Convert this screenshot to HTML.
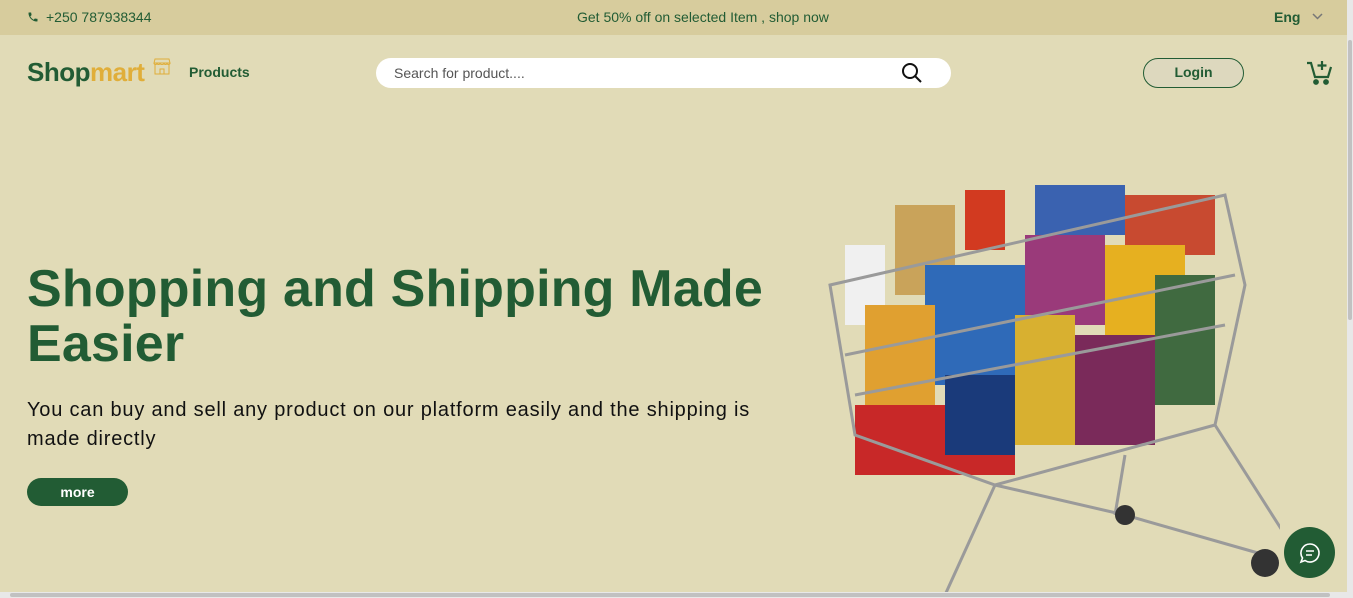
<!DOCTYPE html>
<html><head><style>
*{margin:0;padding:0;box-sizing:border-box}
body{width:1353px;height:598px;overflow:hidden;background:#e1dbb7;font-family:"Liberation Sans",sans-serif;position:relative}
.top{position:absolute;left:0;top:0;width:1347px;height:35px;background:#d7cc9d;color:#225c34;font-size:14px}
.top span{position:absolute;top:9px}
.logo{position:absolute;left:27px;top:57px;font-size:26px;font-weight:bold;color:#225c34;letter-spacing:-0.5px}
.logo b{color:#e0ae3a}
.search{position:absolute;left:376px;top:58px;width:575px;height:30px;background:#fff;border-radius:15px;font-size:14px;color:#555;padding:7px 18px}
.login{position:absolute;left:1143px;top:58px;width:101px;height:30px;border:1.5px solid #225c34;border-radius:15px;background:#ddd8be;color:#225c34;font-weight:bold;font-size:14px;text-align:center;line-height:27px}
h1{position:absolute;left:27px;top:262px;font-size:52px;letter-spacing:0.2px;line-height:55px;color:#225c34;font-weight:bold;width:800px}
p{position:absolute;left:27px;top:396px;font-size:20px;line-height:29px;color:#111;width:740px;letter-spacing:0.8px}
.more{position:absolute;left:27px;top:478px;width:101px;height:28px;background:#225c34;border-radius:14px;color:#fff;font-weight:bold;font-size:14px;text-align:center;line-height:28px}
.chat{position:absolute;left:1284px;top:527px;width:51px;height:51px;border-radius:50%;background:#225c34}
.vs{position:absolute;left:1347px;top:0;width:6px;height:598px;background:#e8e8e8}
.vs div{position:absolute;left:1px;top:40px;width:4px;height:280px;background:#c1c1c1;border-radius:2px}
.hs{position:absolute;left:0;top:592px;width:1347px;height:6px;background:#e8e8e8}
.hs div{position:absolute;left:10px;top:1px;width:1320px;height:4px;background:#c1c1c1;border-radius:2px}
</style></head><body>
<div class="top">
<svg style="position:absolute;left:27px;top:11px" width="12" height="12" viewBox="0 0 24 24"><path fill="#225c34" d="M6.6 10.8c1.4 2.8 3.8 5.1 6.6 6.6l2.2-2.2c.3-.3.7-.4 1-.2 1.1.4 2.3.6 3.6.6.6 0 1 .4 1 1V20c0 .6-.4 1-1 1C10.6 21 3 13.4 3 4c0-.6.4-1 1-1h3.5c.6 0 1 .4 1 1 0 1.3.2 2.5.6 3.6.1.3 0 .7-.2 1z"/></svg>
<span style="left:46px">+250 787938344</span>
<span style="left:577px">Get 50% off on selected Item , shop now</span>
<span style="left:1274px;font-weight:bold">Eng</span>
<svg style="position:absolute;left:1312px;top:13px" width="11" height="8" viewBox="0 0 11 8"><path d="M1 1l4.5 4.5L10 1" stroke="#777" stroke-width="1.5" fill="none"/></svg>
</div>
<div class="logo">Shop<b>mart</b></div>
<svg style="position:absolute;left:153px;top:58px" width="18" height="17" viewBox="0 0 18 17" fill="none" stroke="#e0ae3a" stroke-width="1"><path d="M2 1h14l1 4H1zM1 5c0 2 3 2 3 0 0 2 3 2 3 0 0 2 4 2 4 0 0 2 3 2 3 0 0 2 3 2 3 0M2 7v9h14V7M7 16v-5h4v5"/></svg>
<div style="position:absolute;left:189px;top:64px;font-size:14px;font-weight:bold;color:#225c34">Products</div>
<div class="search">Search for product....</div>
<svg style="position:absolute;left:901px;top:62px" width="22" height="22" viewBox="0 0 22 22" fill="none" stroke="#111" stroke-width="2"><circle cx="9" cy="9" r="7"/><path d="M14 14l6 6"/></svg>
<div class="login">Login</div>
<svg style="position:absolute;left:1306px;top:60px" width="26" height="26" viewBox="0 0 26 26" fill="none" stroke="#225c34" stroke-width="2.2"><path d="M1 3h4l4 14h13l3-10"/><path d="M16 1v9M11.5 5.5h9"/><circle cx="10" cy="22" r="1.8" fill="#225c34"/><circle cx="20" cy="22" r="1.8" fill="#225c34"/></svg>
<h1>Shopping and Shipping Made Easier</h1>
<p>You can buy and sell any product on our platform easily and the shipping is made directly</p>
<div class="more">more</div>
<svg style="position:absolute;left:825px;top:185px" width="455" height="410" viewBox="0 0 455 410">
<g>
<rect x="20" y="60" width="40" height="80" fill="#f0f0f0"/>
<rect x="70" y="20" width="60" height="90" fill="#c9a35a"/>
<rect x="140" y="5" width="40" height="60" fill="#d23a20"/>
<rect x="210" y="0" width="90" height="50" fill="#3a62b0"/>
<rect x="300" y="10" width="90" height="60" fill="#c84a30"/>
<rect x="100" y="80" width="100" height="120" fill="#2f6ab8"/>
<rect x="200" y="50" width="80" height="90" fill="#9a3a7a"/>
<rect x="280" y="60" width="80" height="110" fill="#e6b020"/>
<rect x="190" y="130" width="60" height="130" fill="#d8b030"/>
<rect x="250" y="150" width="80" height="110" fill="#7a2a5a"/>
<rect x="40" y="120" width="70" height="120" fill="#e0a030"/>
<rect x="30" y="220" width="160" height="70" fill="#c82828"/>
<rect x="120" y="190" width="70" height="80" fill="#1a3a7a"/>
<rect x="330" y="90" width="60" height="130" fill="#406a40"/>
</g>
<g stroke="#9a9a9a" stroke-width="3" fill="none">
<path d="M5 100L400 10 420 100 390 240 170 300 30 250z"/>
<path d="M20 170L410 90M30 210L400 140M170 300L120 410M390 240L460 350M300 270L290 330 M170 300L300 330 440 370"/>
</g>
<circle cx="440" cy="378" r="14" fill="#333"/>
<circle cx="300" cy="330" r="10" fill="#333"/>
</svg>
<div class="chat"><svg style="position:absolute;left:15px;top:15px" width="22" height="22" viewBox="0 0 22 22" fill="none" stroke="#fff" stroke-width="1.6"><path d="M11 2a9 9 0 1 1-5 16.5L2 20l1.5-4A9 9 0 0 1 11 2z"/><path d="M7 9h8M7 13h6"/></svg></div>
<div class="vs"><div></div></div>
<div class="hs"><div></div></div>
</body></html>
